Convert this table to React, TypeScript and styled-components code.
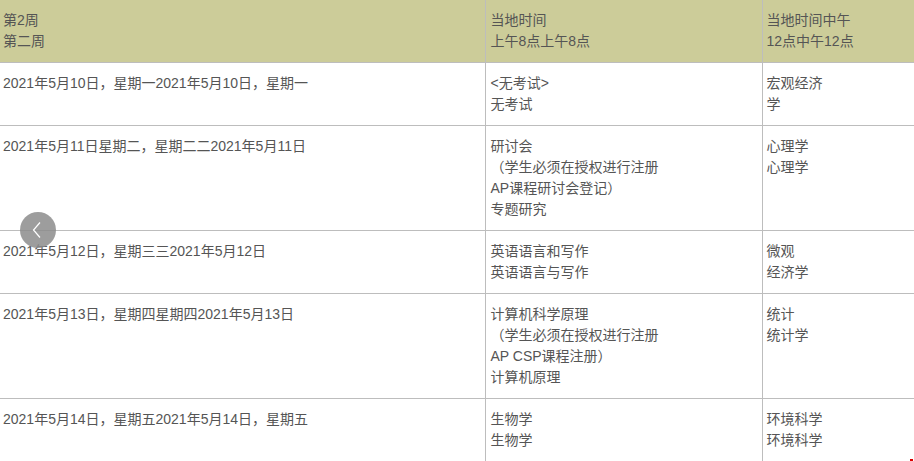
import React from 'react';
import styled, { createGlobalStyle } from "styled-components";

type RowType = {
    date: string;
    morning: string[];
    noon: string[];
};

const rows: RowType[] = [
    { date: "2021年5月10日，星期一2021年5月10日，星期一", morning: ["<无考试>", "无考试"], noon: ["宏观经济", "学"] },
    { date: "2021年5月11日星期二，星期二二2021年5月11日", morning: ["研讨会", "（学生必须在授权进行注册", "AP课程研讨会登记）", "专题研究"], noon: ["心理学", "心理学"] },
    { date: "2021年5月12日，星期三三2021年5月12日", morning: ["英语语言和写作", "英语语言与写作"], noon: ["微观", "经济学"] },
    { date: "2021年5月13日，星期四星期四2021年5月13日", morning: ["计算机科学原理", "（学生必须在授权进行注册", "AP CSP课程注册）", "计算机原理"], noon: ["统计", "统计学"] },
    { date: "2021年5月14日，星期五2021年5月14日，星期五", morning: ["生物学", "生物学"], noon: ["环境科学", "环境科学"] },
];

const Lines = (props: { items: string[] }) => (
    <>
        {props.items.map((t, i) => (
            <Line key={i}>{t}</Line>
        ))}
    </>
);

export default function App() {
    return (
        <Page>
            <Global />
            <Table>
                <colgroup>
                    <col style={{ width: 485 }} />
                    <col style={{ width: 277 }} />
                    <col />
                </colgroup>
                <thead>
                    <tr>
                        <Th $pad={3} $first><Lines items={["第2周", "第二周"]} /></Th>
                        <Th $pad={5}><Lines items={["当地时间", "上午8点上午8点"]} /></Th>
                        <Th $pad={4}><Lines items={["当地时间中午", "12点中午12点"]} /></Th>
                    </tr>
                </thead>
                <tbody>
                    {rows.map((r, i) => (
                        <tr key={i}>
                            <Td $pad={3} $first><Line>{r.date}</Line></Td>
                            <Td $pad={5}><Lines items={r.morning} /></Td>
                            <Td $pad={4}><Lines items={r.noon} /></Td>
                        </tr>
                    ))}
                </tbody>
            </Table>
            <PrevButton aria-label="previous">
                <svg width="12" height="18" viewBox="0 0 12 18">
                    <path d="M9 1.5 L2.5 9 L9 16.5" fill="none" stroke="#fff" strokeWidth="1.2" />
                </svg>
            </PrevButton>
            <RedMark />
        </Page>
    );
}

const Global = createGlobalStyle`
  html, body {
    margin: 0;
    padding: 0;
    background: #fff;
    overflow: hidden;
  }
`

const Page = styled.div`
  position: relative;
  width: 914px;
  height: 461px;
  overflow: hidden;
  font-family: "Liberation Sans", "Noto Sans CJK SC", sans-serif;
  font-size: 14px;
  color: #555;
`

const Table = styled.table`
  width: 914px;
  border-collapse: collapse;
  table-layout: fixed;
`

const Th = styled.th<{ $first?: boolean; $pad: number }>`
  background-color: #cccc99;
  font-weight: normal;
  text-align: left;
  vertical-align: top;
  padding: 10px 5px 10px ${p => p.$pad}px;
  border-bottom: 1px solid #bdbdbd;
  border-left: ${p => (p.$first ? "none" : "1px solid #bdbdbd")};
`

const Td = styled.td<{ $first?: boolean; $pad: number }>`
  vertical-align: top;
  padding: 10px 5px 10px ${p => p.$pad}px;
  border-bottom: 1px solid #bdbdbd;
  border-left: ${p => (p.$first ? "none" : "1px solid #bdbdbd")};
`

const Line = styled.div`
  line-height: 21px;
  height: 21px;
  white-space: nowrap;
`

const PrevButton = styled.button`
  position: absolute;
  left: 20px;
  top: 212px;
  width: 36px;
  height: 36px;
  border-radius: 50%;
  border: none;
  padding: 0 2px 0 0;
  background: rgba(140, 140, 140, 0.85);
  display: flex;
  align-items: center;
  justify-content: center;
`

const RedMark = styled.div`
  position: absolute;
  right: 1px;
  bottom: 0;
  width: 3px;
  height: 2px;
  background: #d00;
`
